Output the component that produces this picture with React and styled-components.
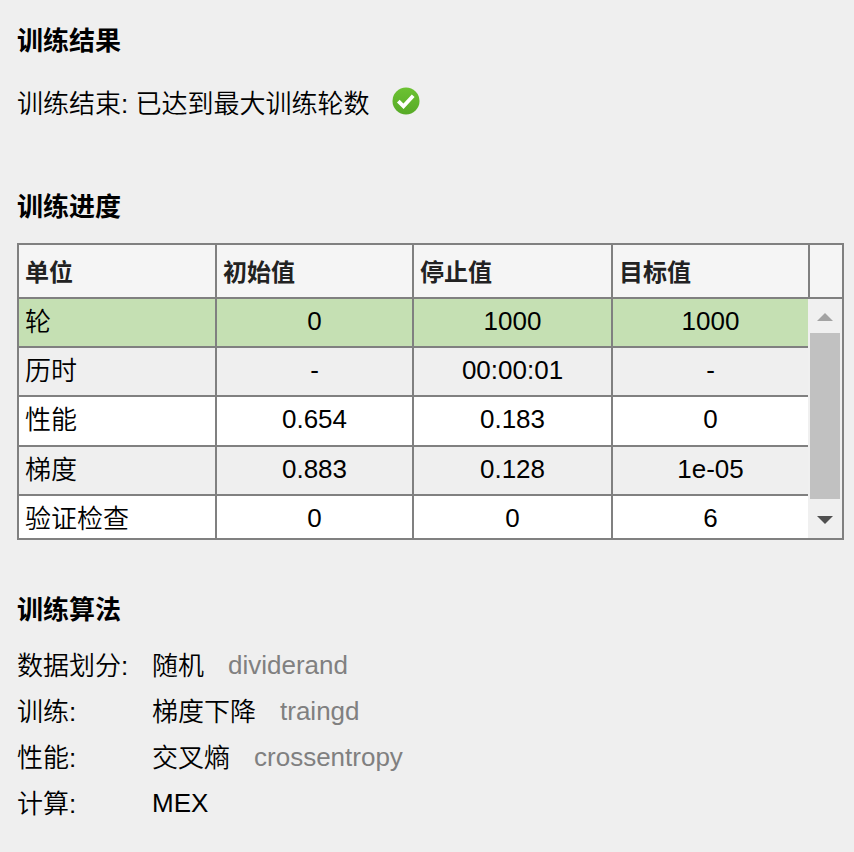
import React from "react";
import styled, { createGlobalStyle } from "styled-components";

const GlobalStyle = createGlobalStyle`
  * { box-sizing: border-box; }
  body {
    margin: 0;
    background: #efefef;
    color: #000;
    font: 350 26px/46px "Liberation Sans", "Noto Sans CJK SC", sans-serif;
  }
`;

const Page = styled.main`
  width: 854px;
  height: 852px;
  padding: 17px 10px 0 17px;
  overflow: hidden;
  background: #efefef;
`;

const Heading = styled.h2`
  margin: 0;
  height: 46px;
  font-size: 26px;
  line-height: 48px;
  font-weight: 700;
`;

const Section = styled.section`
  height: ${(p) => p.$height}px;
`;

const Status = styled.div`
  display: flex;
  align-items: center;
  gap: 23px;
  margin-top: 17px;
  height: 48px;
`;

const Check = styled.svg`
  display: block;
  margin-top: -6px;
`;

const Grid = styled.div`
  width: 827px;
  height: 297px;
  margin-top: 14px;
  border: 2px solid #808080;
`;

const columns = "198px 197px 199px";

const HeaderRow = styled.div`
  display: grid;
  grid-template-columns: ${columns} 197px 32px;
  height: 54px;
  background: #f5f5f5;
  border-bottom: 2px solid #808080;
`;

const HeaderCell = styled.div`
  padding-left: 6px;
  font-size: 24px;
  line-height: 55px;
  font-weight: 700;
  color: #222;
  overflow: hidden;
  border-right: ${(p) => (p.$last ? 0 : 2)}px solid #808080;
`;

const Body = styled.div`
  display: flex;
  height: 239px;
`;

const Rows = styled.div`
  width: 789px;
`;

const Row = styled.div`
  display: grid;
  grid-template-columns: ${columns} 195px;
  grid-template-rows: 100%;
  height: ${(p) => p.$height}px;
  background: ${(p) => p.$bg};
  border-bottom: ${(p) => (p.$last ? 0 : 2)}px solid #808080;
`;

const Cell = styled.div`
  padding-left: ${(p) => (p.$label ? 6 : 0)}px;
  text-align: ${(p) => (p.$label ? "left" : "center")};
  line-height: ${(p) => (p.$label ? 46 : 44)}px;
  overflow: hidden;
  border-right: ${(p) => (p.$last ? 0 : 2)}px solid #808080;
`;

const ScrollBar = styled.div`
  display: flex;
  flex-direction: column;
  align-items: center;
  width: 34px;
  background: #f0f0f0;
`;

const ScrollArrow = styled.svg`
  display: block;
  flex: none;
  width: 16px;
  height: 8px;
  margin: ${(p) => p.$margin};
  fill: ${(p) => p.$color};
`;

const Thumb = styled.div`
  width: 30px;
  height: 166px;
  background: #c1c1c1;
`;

const Details = styled.dl`
  display: grid;
  grid-template-columns: 135px 1fr;
  grid-auto-rows: 46px;
  margin: 10px 0 0;
`;

const Term = styled.dt`
  line-height: 48px;
`;

const Value = styled.dd`
  display: flex;
  gap: 24px;
  margin: 0;
  line-height: ${(p) => (p.$latin ? 46 : 48)}px;
`;

const FunctionName = styled.span`
  color: #808080;
  line-height: 46px;
`;

const headers = ["单位", "初始值", "停止值", "目标值"];

const rows = [
  { cells: ["轮", "0", "1000", "1000"], height: 49, bg: "#c5e0b3" },
  { cells: ["历时", "-", "00:00:01", "-"], height: 49, bg: "#efefef" },
  { cells: ["性能", "0.654", "0.183", "0"], height: 50, bg: "#fff" },
  { cells: ["梯度", "0.883", "0.128", "1e-05"], height: 49, bg: "#efefef" },
  { cells: ["验证检查", "0", "0", "6"], height: 42, bg: "#fff" },
];

const algorithms = [
  { term: "数据划分:", value: "随机", fn: "dividerand" },
  { term: "训练:", value: "梯度下降", fn: "traingd" },
  { term: "性能:", value: "交叉熵", fn: "crossentropy" },
  { term: "计算:", value: "MEX", latin: true },
];

export default function App() {
  return (
    <Page>
      <GlobalStyle />
      <Section $height={166}>
        <Heading>训练结果</Heading>
        <Status>
          <span>训练结束: 已达到最大训练轮数</span>
          <Check width="28" height="28" viewBox="0 0 28 28">
            <defs>
              <linearGradient id="disc" x1="0" y1="0" x2="0" y2="1">
                <stop offset="0" stopColor="#6cc232" />
                <stop offset="1" stopColor="#57aa27" />
              </linearGradient>
            </defs>
            <circle cx="14" cy="14" r="13.5" fill="url(#disc)" />
            <path d="M6.3 14.2l5.2 5.1L21.2 8.8" fill="none" stroke="#fff" strokeWidth="3.8" />
          </Check>
        </Status>
      </Section>
      <Section $height={403}>
        <Heading>训练进度</Heading>
        <Grid>
          <HeaderRow>
            {headers.map((h) => (
              <HeaderCell key={h}>{h}</HeaderCell>
            ))}
            <HeaderCell $last />
          </HeaderRow>
          <Body>
            <Rows>
              {rows.map((row, r) => (
                <Row key={r} $height={row.height} $bg={row.bg} $last={r === rows.length - 1}>
                  {row.cells.map((text, c) => (
                    <Cell key={c} $label={c === 0} $last={c === 3}>
                      {text}
                    </Cell>
                  ))}
                </Row>
              ))}
            </Rows>
            <ScrollBar>
              <ScrollArrow viewBox="0 0 16 8" $color="#a3a3a3" $margin="14px 0 12px">
                <path d="M0 8L8 0l8 8z" />
              </ScrollArrow>
              <Thumb />
              <ScrollArrow viewBox="0 0 16 8" $color="#505050" $margin="17px 0 0">
                <path d="M0 0h16L8 8z" />
              </ScrollArrow>
            </ScrollBar>
          </Body>
        </Grid>
      </Section>
      <Section $height={240}>
        <Heading>训练算法</Heading>
        <Details>
          {algorithms.map(({ term, value, fn, latin }) => (
            <React.Fragment key={term}>
              <Term>{term}</Term>
              <Value $latin={latin}>
                <span>{value}</span>
                {fn && <FunctionName>{fn}</FunctionName>}
              </Value>
            </React.Fragment>
          ))}
        </Details>
      </Section>
    </Page>
  );
}
